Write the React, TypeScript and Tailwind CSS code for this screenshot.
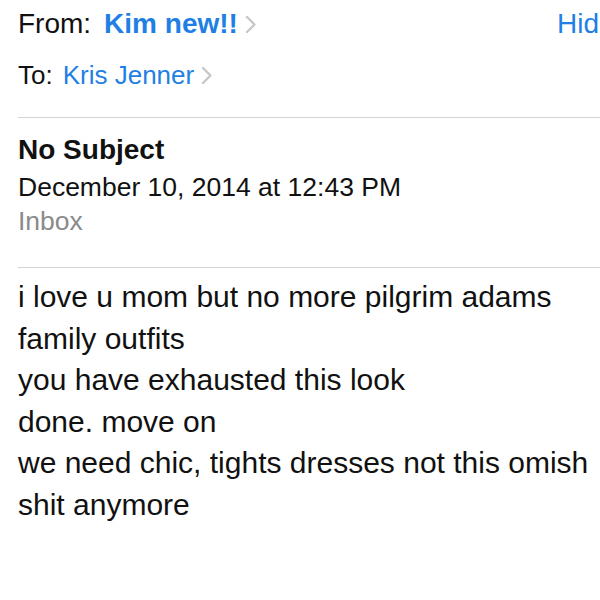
const BODY = [
  "i love u mom but no more pilgrim adams",
  "family outfits",
  "you have exhausted this look",
  "done. move on",
  "we need chic, tights dresses not this omish",
  "shit anymore",
];

function Chevron() {
  return (
    <svg width="12" height="19" viewBox="0 0 12 19" className="ml-[7px] shrink-0">
      <polyline
        points="2,2 9.5,9.5 2,17"
        fill="none"
        stroke="#c7c7c7"
        strokeWidth="2.4"
        strokeLinecap="round"
        strokeLinejoin="round"
      />
    </svg>
  );
}

export default function App() {
  return (
    <div
      className="w-[600px] h-[600px] overflow-hidden bg-white text-[#111]"
      style={{ fontFamily: '"Liberation Sans", Arial, sans-serif' }}
    >
      <div className="pl-[18px]">
        {/* header */}
        <div className="pt-[6px] pb-[25px] border-b border-[#d4d4d4]">
          <div className="flex items-center justify-between h-[36px] text-[28px]">
            <div className="flex items-center">
              <span>From:</span>
              <span className="ml-[13px] font-bold text-[#1f7fe4]">Kim new!!</span>
              <Chevron />
            </div>
            <span className="text-[#1f7fe4] w-[43px] overflow-hidden whitespace-nowrap">Hide</span>
          </div>
          <div className="flex items-center h-[34px] mt-[16px] text-[26px]">
            <span>To:</span>
            <span className="ml-[10px] text-[#1f7fe4]">Kris Jenner</span>
            <Chevron />
          </div>
        </div>

        {/* subject */}
        <div className="pt-[15px] pb-[32px] border-b border-[#d4d4d4]">
          <div className="text-[28px] font-bold leading-[34px]">No Subject</div>
          <div className="text-[26.5px] leading-[40px]">December 10, 2014 at 12:43 PM</div>
          <div className="text-[26.5px] leading-[28px] text-[#8a8a8a]">Inbox</div>
        </div>

        {/* body */}
        <div className="pt-[8px] text-[30px] leading-[41.5px]">
          {BODY.map((line) => (
            <div key={line}>{line}</div>
          ))}
        </div>
      </div>
    </div>
  );
}
